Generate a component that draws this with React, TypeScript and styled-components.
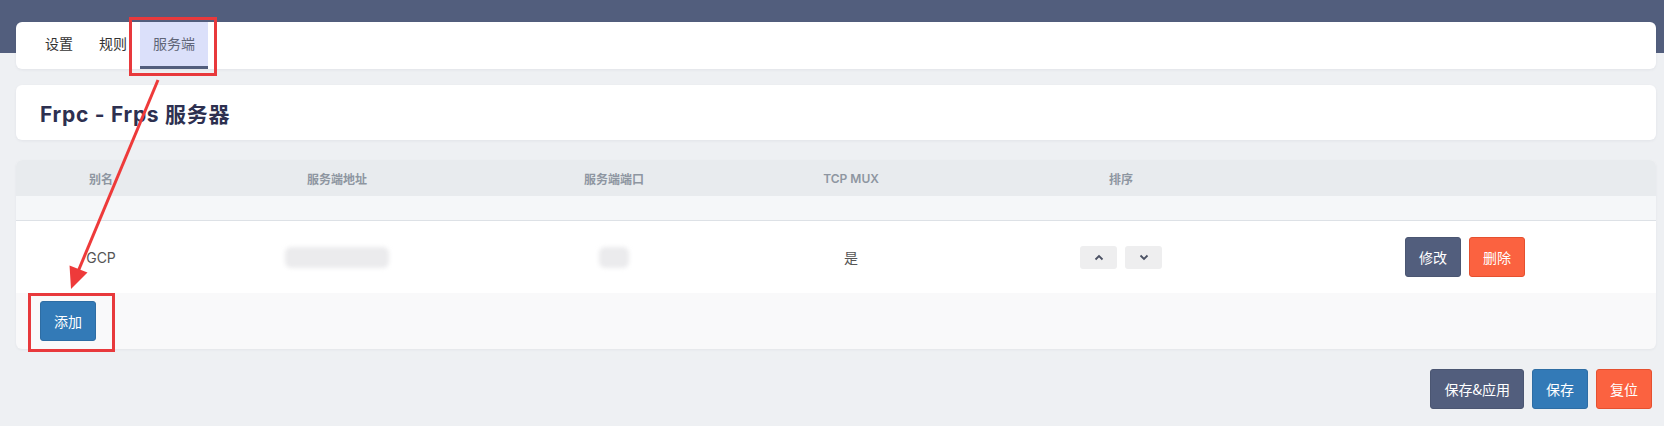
import React from 'react';
import styled, { createGlobalStyle } from 'styled-components';

const GlobalStyle = createGlobalStyle`
  html, body {
    margin: 0;
    padding: 0;
  }
  body {
    font-family: Inter, "Noto Sans CJK SC", sans-serif;
    background: #eef0f3;
  }
`;

const Page = styled.div`
  position: relative;
  width: 1664px;
  height: 426px;
  box-sizing: border-box;
  padding: 22px 8px 0 16px;
  background: linear-gradient(#525e7d 0, #525e7d 53px, #eef0f3 53px);
  overflow: hidden;
`;

const Card = styled.div<{ $pad?: string }>`
  background: #fff;
  border-radius: 6px;
  box-shadow: 0 1px 3px rgba(30, 40, 60, 0.06);
  padding: ${(p) => p.$pad || '0'};
`;

const TabBar = styled(Card)`
  display: flex;
  height: 47px;
  padding-left: 16px;
  margin-bottom: 16px;
`;

const Tab = styled.div<{ $active?: boolean }>`
  display: flex;
  align-items: center;
  padding: 0 13px 3px;
  font-size: 14px;
  color: ${(p) => (p.$active ? '#5f6577' : '#333')};
  background: ${(p) => (p.$active ? '#dbe0fa' : 'transparent')};
  border-bottom: 3px solid ${(p) => (p.$active ? '#525e7d' : 'transparent')};
  box-sizing: border-box;
`;

const TitleCard = styled(Card)`
  height: 55px;
  display: flex;
  align-items: center;
  padding-left: 24px;
  margin-bottom: 20px;
`;

const Title = styled.h2`
  margin: 0;
  font-size: 21px;
  font-weight: 700;
  color: #2d3050;
  letter-spacing: 0.7px;
`;

const TableCard = styled.div`
  border-radius: 6px;
  overflow: hidden;
  background: #f9f9fa;
  box-shadow: 0 1px 3px rgba(30, 40, 60, 0.05);
`;

const Row = styled.div<{ $kind: 'head' | 'spacer' | 'data' }>`
  display: grid;
  grid-template-columns: 170px 302px 252px 222px 318px 1fr;
  align-items: center;
  height: ${(p) => (p.$kind === 'head' ? '36px' : p.$kind === 'spacer' ? '24px' : '72px')};
  background: ${(p) => (p.$kind === 'head' ? '#e8ebee' : p.$kind === 'spacer' ? '#f5f7f9' : '#fff')};
  border-bottom: ${(p) => (p.$kind === 'spacer' ? '1px solid #dde1e6' : 'none')};
`;

const HeadCell = styled.div`
  text-align: center;
  font-size: 12px;
  font-weight: 600;
  color: #8e96a1;
`;

const Cell = styled.div`
  display: flex;
  justify-content: center;
  align-items: center;
  gap: 8px;
  font-size: 14px;
  color: #555;
`;

const ActionCell = styled(Cell)`
  padding-right: 6px;
`;

const Blur = styled.div<{ $w: number }>`
  width: ${(p) => p.$w}px;
  height: 21px;
  background: #ebebed;
  border-radius: 6px;
  filter: blur(2px);
`;

const SortBtn = styled.button`
  width: 37px;
  height: 23px;
  display: flex;
  align-items: center;
  justify-content: center;
  padding: 0;
  border: none;
  border-radius: 3px;
  background: #eeeeef;
  color: #4b5163;
`;

const Btn = styled.button<{ $tone: 'slate' | 'blue' | 'red' }>`
  height: 40px;
  padding: 0 13px;
  font-family: "Noto Sans CJK SC", Inter, sans-serif;
  font-size: 14px;
  color: #fff;
  border-radius: 3px;
  cursor: pointer;
  background: ${(p) => (p.$tone === 'slate' ? '#525e7d' : p.$tone === 'blue' ? '#337ab7' : '#fb6240')};
  border: 1px solid ${(p) => (p.$tone === 'slate' ? '#4b5672' : p.$tone === 'blue' ? '#2e6da4' : '#e5502f')};
`;

const Footer = styled.div`
  height: 56px;
  box-sizing: border-box;
  padding: 8px 24px;
`;

const Actions = styled.div`
  display: flex;
  justify-content: flex-end;
  gap: 8px;
  margin-top: 20px;
  padding-right: 4px;
`;

const Overlay = styled.svg`
  position: absolute;
  top: 0;
  left: 0;
  pointer-events: none;
`;

const Chevron = ({ up }: { up?: boolean }) => (
  <svg width="10" height="7" viewBox="0 0 10 7">
    <path
      d={up ? 'M1.5 5.5 L5 2 L8.5 5.5' : 'M1.5 1.5 L5 5 L8.5 1.5'}
      fill="none"
      stroke="currentColor"
      strokeWidth="1.8"
    />
  </svg>
);

const columns = ['别名', '服务端地址', '服务端端口', 'TCP MUX', '排序', ''];

export default function App() {
  return (
    <Page>
      <GlobalStyle />
      <TabBar>
        <Tab>设置</Tab>
        <Tab>规则</Tab>
        <Tab $active>服务端</Tab>
      </TabBar>

      <TitleCard>
        <Title>Frpc - Frps 服务器</Title>
      </TitleCard>

      <TableCard>
        <Row $kind="head">
          {columns.map((c, i) => (
            <HeadCell key={i}>{c}</HeadCell>
          ))}
        </Row>
        <Row $kind="spacer" />
        <Row $kind="data">
          <Cell>GCP</Cell>
          <Cell>
            <Blur $w={104} />
          </Cell>
          <Cell>
            <Blur $w={30} />
          </Cell>
          <Cell>是</Cell>
          <Cell>
            <SortBtn>
              <Chevron up />
            </SortBtn>
            <SortBtn>
              <Chevron />
            </SortBtn>
          </Cell>
          <ActionCell>
            <Btn $tone="slate">修改</Btn>
            <Btn $tone="red">删除</Btn>
          </ActionCell>
        </Row>
        <Footer>
          <Btn $tone="blue">添加</Btn>
        </Footer>
      </TableCard>

      <Actions>
        <Btn $tone="slate">保存&amp;应用</Btn>
        <Btn $tone="blue">保存</Btn>
        <Btn $tone="red">复位</Btn>
      </Actions>

      <Overlay width="1664" height="426" viewBox="0 0 1664 426">
        <rect x="130.5" y="18.5" width="85" height="56" fill="none" stroke="#e8393c" strokeWidth="3" />
        <rect x="29.5" y="294.5" width="84" height="56" fill="none" stroke="#e8393c" strokeWidth="3" />
        <line x1="158" y1="80" x2="77" y2="274" stroke="#ee3a3a" strokeWidth="3" />
        <polygon points="71,289 87.5,272.5 69.5,265.5" fill="#ee3a3a" />
      </Overlay>
    </Page>
  );
}
